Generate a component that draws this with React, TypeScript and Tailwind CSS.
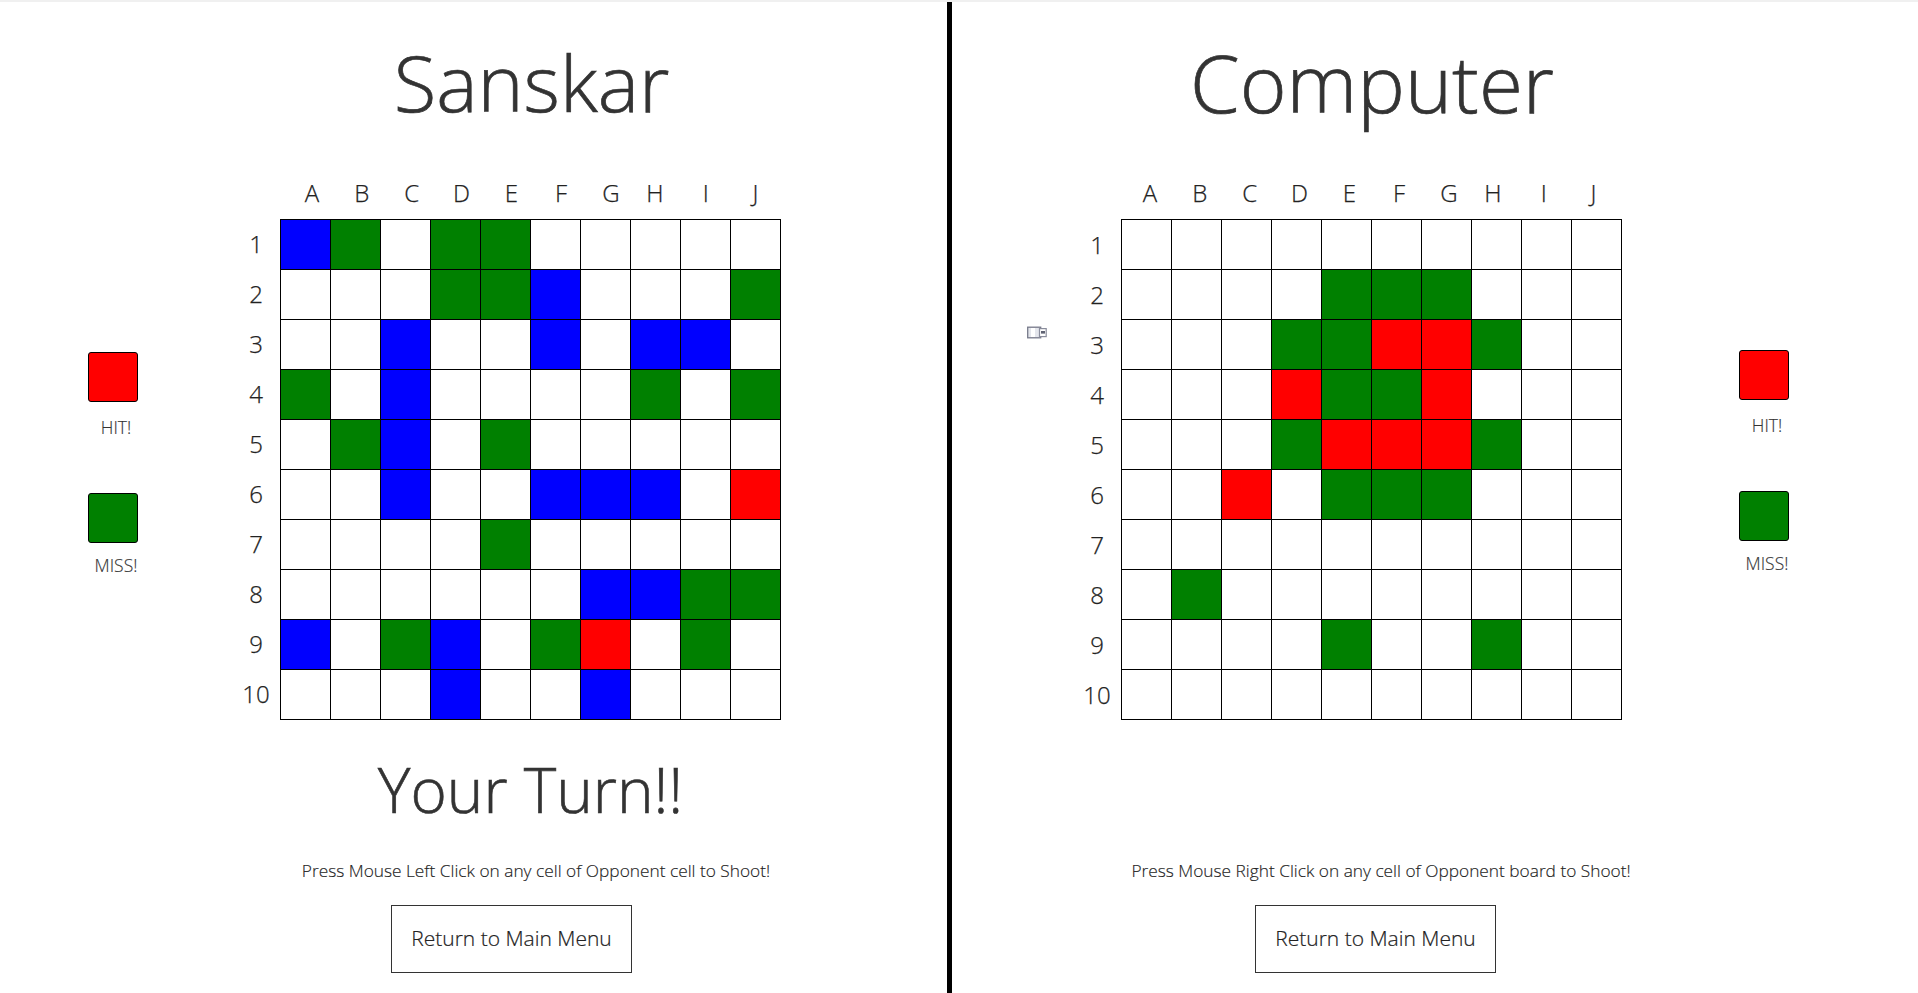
const FONT = "font-['Open_Sans',sans-serif]";
const COLS = "ABCDEFGHIJ".split("");

const LEFT = [
  "BG.GG.....",
  "...GGB...G",
  "..B..B.BB.",
  "G.B....G.G",
  ".GB.G.....",
  "..B..BBB.R",
  "....G.....",
  "......BBGG",
  "B.GB.GR.G.",
  "...B..B...",
];
const RIGHT = [
  "..........",
  "....GGG...",
  "...GGRRG..",
  "...RGGR...",
  "...GRRRG..",
  "..R.GGG...",
  "..........",
  ".G........",
  "....G..G..",
  "..........",
];

function cellClass(c: string) {
  if (c === "B") return "bg-[#0000ff]";
  if (c === "G") return "bg-[#008000]";
  if (c === "R") return "bg-[#ff0000]";
  return "bg-white";
}

function Board({ data, labels, rowPad }: { data: string[]; labels: string; rowPad: string }) {
  return (
    <div className="w-[551px] shrink-0 text-[24px] font-light text-[#222] [-webkit-text-stroke:0.25px_#222]">
      <div className={`flex h-[48px] items-center pb-[4px] ${labels}`}>
        {COLS.map((c) => (
          <div key={c} className={`w-[49.85px] text-center ${c === "H" ? "-ml-[6px] mr-[1px]" : ""}`}>{c}</div>
        ))}
      </div>
      <div className="flex">
        <div className={`w-[50px] ${rowPad}`}>
          {data.map((_, r) => (
            <div key={r} className="flex h-[50px] items-center justify-center pl-[2px]">{r + 1}</div>
          ))}
        </div>
        <div className="grid w-[501px] grid-cols-10 border-r border-b border-black">
          {data.join("").split("").map((c, i) => (
            <div key={i} className={`h-[50px] w-[50px] border-t border-l border-black ${cellClass(c)}`} />
          ))}
        </div>
      </div>
    </div>
  );
}

function Legend({ top }: { top: string }) {
  return (
    <div className={`w-[56px] shrink-0 text-[17.5px] font-light text-[#333] [-webkit-text-stroke:0.15px_#333] ${top}`}>
      <div className="h-[50px] w-[50px] rounded-[3px] border border-black bg-[#ff0000]" />
      <div className="mt-[13px] h-[24px] text-center leading-[24px]">HIT!</div>
      <div className="mt-[54px] h-[50px] w-[50px] rounded-[3px] border border-black bg-[#008000]" />
      <div className="mt-[10px] h-[24px] text-center leading-[24px]">MISS!</div>
    </div>
  );
}

function Footer({ hint, turn, turnPad, center, btnLeft }: { hint: string; turn?: string; turnPad?: string; center: string; btnLeft: string }) {
  return (
    <>
      <div className={`mt-[21px] h-[96px] text-center text-[62px] leading-[96px] font-light text-[#333] [-webkit-text-stroke:0.6px_#333] ${turnPad ?? ""}`}>{turn}</div>
      <div className={`mt-[20px] h-[28px] text-center text-[17.3px] leading-[28px] font-light text-[#222] [-webkit-text-stroke:0.15px_#222] ${center}`}>{hint}</div>
      <div className={btnLeft}>
        <div className="mt-[20px] flex h-[68px] w-[241px] items-center justify-center border border-[#333] text-[21px] font-light text-[#222] [-webkit-text-stroke:0.2px_#222]">
          Return to Main Menu
        </div>
      </div>
    </>
  );
}

function ShipIcon() {
  return (
    <svg className="absolute left-[75px] top-[324px]" width="20" height="13" viewBox="0 0 20 13">
      <rect x="0.7" y="1.2" width="13" height="10.6" fill="#e4e6ec" stroke="#777a8a" strokeWidth="1.3" />
      <rect x="4" y="2" width="4" height="9" fill="#ffffff" />
      <rect x="12.5" y="2.6" width="6.7" height="8" fill="#ffffff" stroke="#8a8d9c" strokeWidth="1.2" />
      <rect x="14" y="5" width="4" height="2.6" fill="#5f6272" />
    </svg>
  );
}

export default function App() {
  return (
    <div className={`flex h-[993px] w-full flex-col overflow-hidden bg-white ${FONT}`}>
      <div className="h-[2px] shrink-0 bg-[#f0f0f0]" />
      <div className="flex flex-1">
        <div className="w-[947px] shrink-0">
          <h1 className="mt-[26px] h-[108px] pl-[116px] text-center text-[78px] leading-[108px] font-light text-[#333] [-webkit-text-stroke:0.7px_#333]">Sanskar</h1>
          <div className="mt-[35px] flex pl-[88px]">
            <Legend top="mt-[181px]" />
            <div className="ml-[86px]"><Board data={LEFT} labels="pl-[57px]" rowPad="" /></div>
          </div>
          <Footer
            turn="Your Turn!!"
            turnPad="pl-[114px]"
            hint="Press Mouse Left Click on any cell of Opponent cell to Shoot!"
            center="pl-[125px]"
            btnLeft="pl-[391px]"
          />
        </div>
        <div className="w-[5px] shrink-0 bg-black" />
        <div className="relative flex-1">
          <ShipIcon />
          <h1 className="mt-[26px] h-[108px] pr-[126px] text-center text-[80px] leading-[108px] font-light text-[#333] [-webkit-text-stroke:0.7px_#333]">Computer</h1>
          <div className="mt-[35px] flex pl-[119px]">
            <Board data={RIGHT} labels="pl-[54px]" rowPad="pt-[1px]" />
            <div className="ml-[117px]"><Legend top="mt-[179px]" /></div>
          </div>
          <Footer
            hint="Press Mouse Right Click on any cell of Opponent board to Shoot!"
            center="pr-[108px]"
            btnLeft="pl-[303px]"
          />
        </div>
      </div>
    </div>
  );
}
